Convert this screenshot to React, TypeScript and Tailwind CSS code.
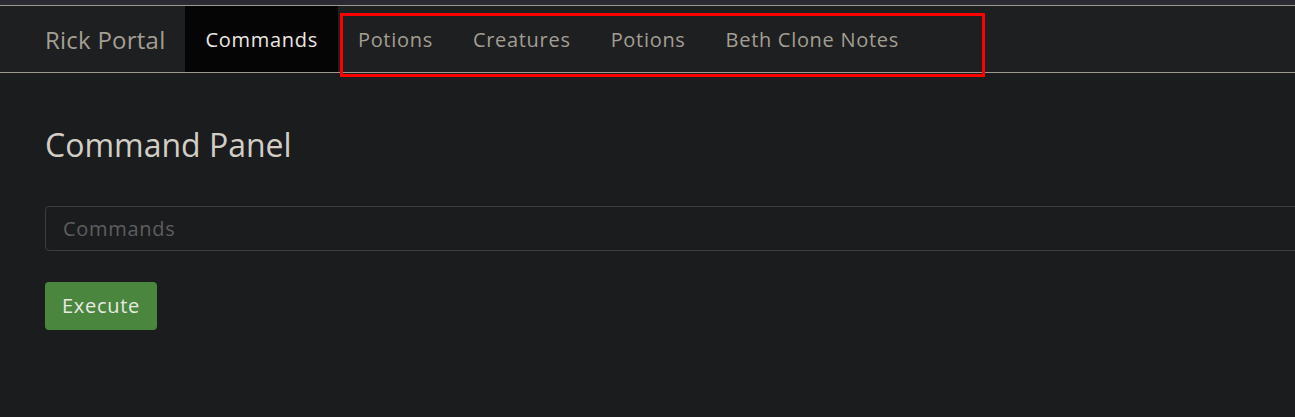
export default function App() {
  const items = ['Potions', 'Creatures', 'Potions', 'Beth Clone Notes']
  return (
    <div className="relative min-h-[417px] w-full bg-[#1b1c1e] font-['Open_Sans',sans-serif]">
      <div className="h-[5px] bg-[#2b2a33]" />
      <div className="h-px bg-[#9e998f]" />
      <nav className="flex h-[67px] items-stretch border-b border-[#9e998f] bg-[#1e1f21] pl-[45px]">
        <span className="mr-5 flex items-center pt-px text-2xl tracking-[0.01em] text-[#a39e93]">Rick Portal</span>
        <a className="flex items-center bg-[#050505] px-5 pt-px text-xl tracking-[0.035em] text-[#ebe8e2]">Commands</a>
        {items.map((t, i) => (
          <a key={i} className="flex items-center px-5 pt-px text-xl tracking-[0.035em] text-[#a39e93]">{t}</a>
        ))}
      </nav>

      <main className="px-[45px] pt-[52px]">
        <h1 className="text-[32px] leading-10 text-[#d2cec6]">Command Panel</h1>
        <input
          placeholder="Commands"
          className="mt-[41px] h-[45px] w-[1300px] rounded border border-[#3c3d3f] bg-[#1b1c1e] px-[17px] text-xl tracking-[0.035em] text-[#ccc] placeholder:text-[#5e5e5e] outline-none"
        />
        <div className="mt-[31px]">
          <button className="h-[48px] rounded bg-[#4a863d] px-[17px] text-xl tracking-[0.035em] text-[#e9e9e6]">Execute</button>
        </div>
      </main>

      <div className="pointer-events-none absolute left-[340px] top-[13px] h-[64px] w-[645px] border-[3px] border-[#ff0000]" />
    </div>
  )
}
